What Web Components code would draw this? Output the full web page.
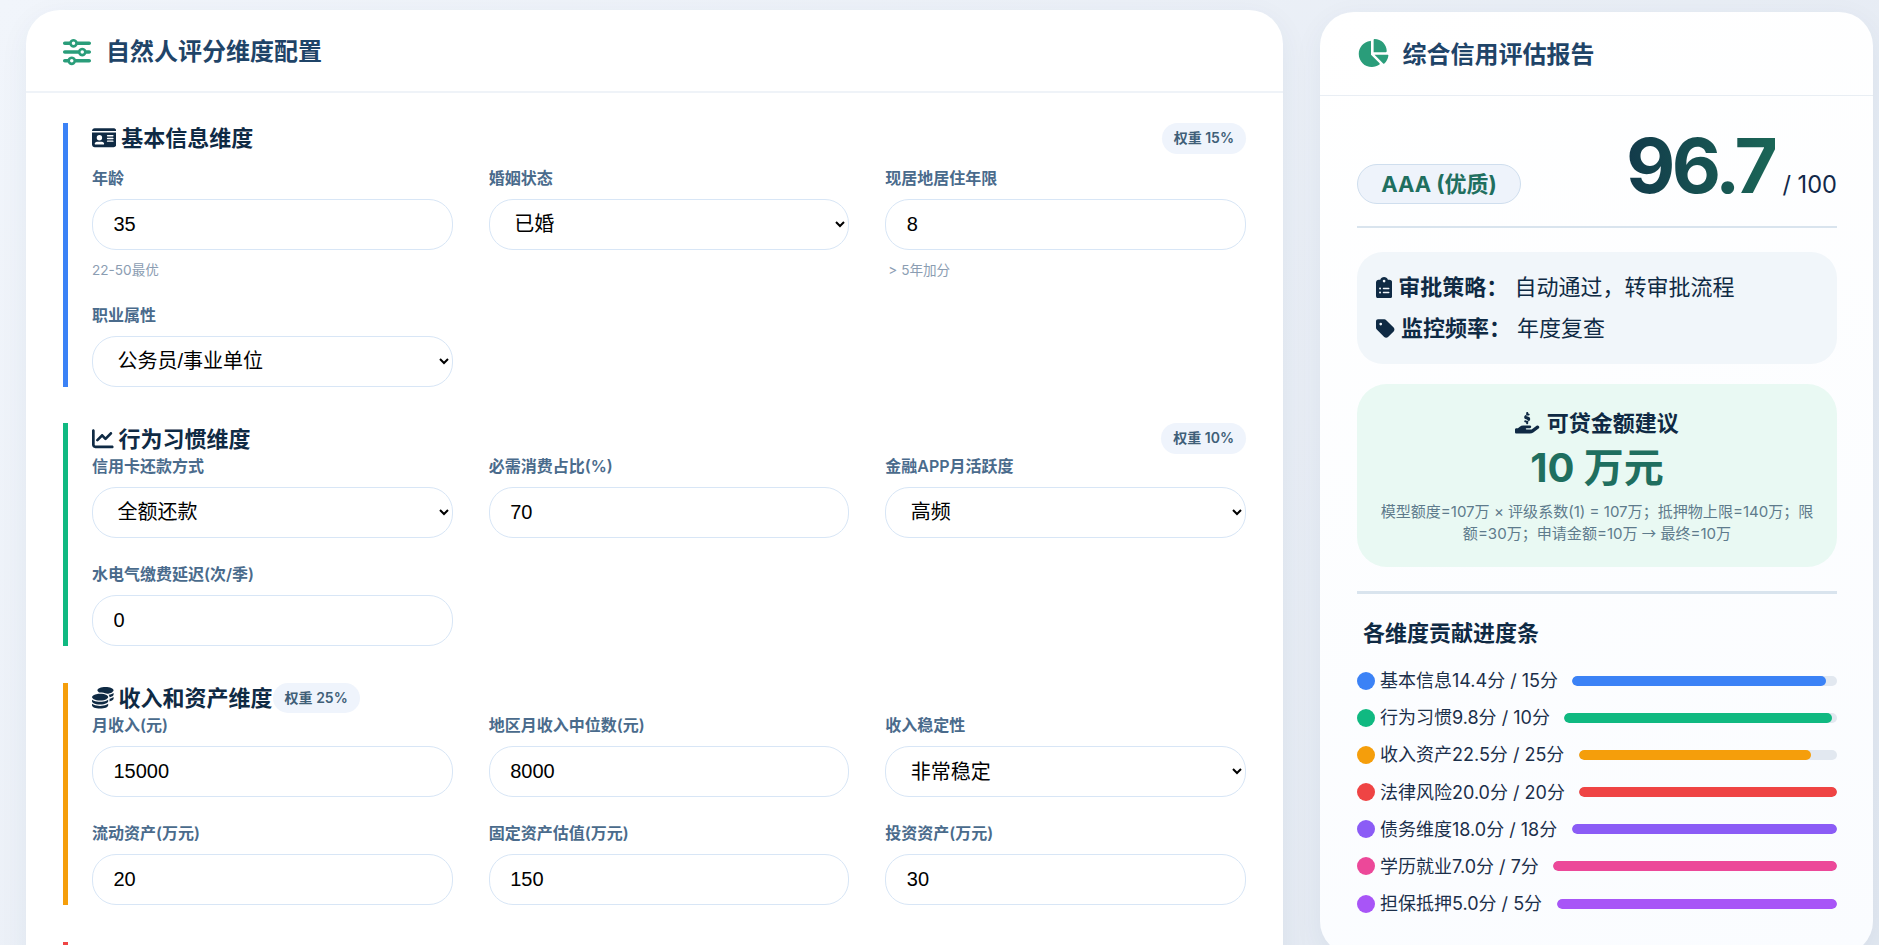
<!DOCTYPE html>
<html lang="zh-CN"><head><meta charset="utf-8"><title>信用评估</title>
<style>
html,body{margin:0;height:945px;overflow:hidden}
body{background:linear-gradient(135deg,#f1f5fb 0%,#e2e8f1 100%);font-family:Inter,"Noto Sans CJK SC",sans-serif;color:#0f2a44}
</style></head><body>
<credit-app>
  <config-card slot="left" heading="自然人评分维度配置">
    <dim-section color="#3b82f6" icon="idcard" heading="基本信息维度" weight="权重 15%" gap>
      <form-field label="年龄" value="35" hint="22-50最优"></form-field>
      <form-field label="婚姻状态" options="已婚,未婚,离异"></form-field>
      <form-field label="现居地居住年限" value="8" hint="&gt; 5年加分" nudge></form-field>
      <form-field label="职业属性" options="公务员/事业单位,企业员工,自由职业"></form-field>
    </dim-section>
    <dim-section color="#10b981" icon="line" heading="行为习惯维度" weight="权重 10%">
      <form-field label="信用卡还款方式" options="全额还款,最低还款"></form-field>
      <form-field label="必需消费占比(%)" value="70"></form-field>
      <form-field label="金融APP月活跃度" options="高频,中频,低频"></form-field>
      <form-field label="水电气缴费延迟(次/季)" value="0"></form-field>
    </dim-section>
    <dim-section color="#f59e0b" icon="coins" heading="收入和资产维度" weight="权重 25%" inline>
      <form-field label="月收入(元)" value="15000"></form-field>
      <form-field label="地区月收入中位数(元)" value="8000"></form-field>
      <form-field label="收入稳定性" options="非常稳定,稳定,一般"></form-field>
      <form-field label="流动资产(万元)" value="20"></form-field>
      <form-field label="固定资产估值(万元)" value="150"></form-field>
      <form-field label="投资资产(万元)" value="30"></form-field>
    </dim-section>
    <dim-section color="#ef4444" icon="scale"></dim-section>
  </config-card>
  <report-card slot="right" heading="综合信用评估报告">
    <progress-row color="#3b82f6" label="基本信息14.4分 / 15分" pct="96"></progress-row>
    <progress-row color="#10b981" label="行为习惯9.8分 / 10分" pct="98"></progress-row>
    <progress-row color="#f59e0b" label="收入资产22.5分 / 25分" pct="90"></progress-row>
    <progress-row color="#ef4444" label="法律风险20.0分 / 20分" pct="100"></progress-row>
    <progress-row color="#8b5cf6" label="债务维度18.0分 / 18分" pct="100"></progress-row>
    <progress-row color="#ec4899" label="学历就业7.0分 / 7分" pct="100"></progress-row>
    <progress-row color="#a855f7" label="担保抵押5.0分 / 5分" pct="100"></progress-row>
  </report-card>
</credit-app>
<script>
const ICONS={
sliders:[512,'M0 416c0 17.700 14.300 32 32 32l54.700 0c12.300 28.300 40.500 48 73.300 48s61-19.700 73.300-48L480 448c17.700 0 32-14.300 32-32s-14.300-32-32-32l-246.700 0c-12.300-28.300-40.500-48-73.300-48s-61 19.700-73.300 48L32 384c-17.700 0-32 14.300-32 32zm128 0a32 32 0 1 1 64 0 32 32 0 1 1 -64 0zM320 256a32 32 0 1 1 64 0 32 32 0 1 1 -64 0zm32-80c-32.800 0-61 19.700-73.300 48L32 224c-17.700 0-32 14.300-32 32s14.300 32 32 32l246.700 0c12.300 28.300 40.500 48 73.300 48s61-19.700 73.300-48l54.700 0c17.700 0 32-14.300 32-32s-14.300-32-32-32l-54.700 0c-12.300-28.300-40.500-48-73.300-48zM192 128a32 32 0 1 1 0-64 32 32 0 1 1 0 64zm73.300-64C253 35.700 224.800 16 192 16s-61 19.700-73.300 48L32 64C14.300 64 0 78.300 0 96s14.300 32 32 32l86.700 0c12.300 28.300 40.500 48 73.300 48s61-19.700 73.300-48L480 128c17.700 0 32-14.300 32-32s-14.300-32-32-32L265.300 64z'],
pie:[576,'M304 240V16.600c0-9 7-16.600 16-16.600C443.700 0 544 100.300 544 224c0 9-7.600 16-16.600 16H304zM32 272C32 150.700 122.100 50.300 239 34.300c9.200-1.300 17 6.100 17 15.400V288L412.500 444.500c6.700 6.700 6.200 17.700-1.500 23.100C371.800 495.600 323.800 512 272 512C139.500 512 32 404.600 32 272zm526.400 16c9.300 0 16.600 7.800 15.400 17c-7.700 55.900-34.600 105.600-73.900 142.300c-6 5.600-15.400 5.200-21.200-.7L320 288H558.400z'],
idcard:[576,'M0 96l576 0c0-35.300-28.700-64-64-64H64C28.700 32 0 60.700 0 96zm0 32V416c0 35.300 28.700 64 64 64H512c35.300 0 64-28.700 64-64V128H0zM64 405.300c0-29.500 23.900-53.300 53.300-53.300H234.700c29.500 0 53.300 23.900 53.300 53.300c0 5.900-4.800 10.700-10.700 10.700H74.700c-5.900 0-10.700-4.800-10.700-10.700zM176 192a64 64 0 1 1 0 128 64 64 0 1 1 0-128zm176 16c0-8.800 7.200-16 16-16H496c8.800 0 16 7.200 16 16s-7.200 16-16 16H368c-8.800 0-16-7.200-16-16zm0 64c0-8.800 7.200-16 16-16H496c8.800 0 16 7.200 16 16s-7.200 16-16 16H368c-8.800 0-16-7.200-16-16zm0 64c0-8.800 7.200-16 16-16H496c8.800 0 16 7.200 16 16s-7.200 16-16 16H368c-8.800 0-16-7.200-16-16z'],
line:[512,'M64 64c0-17.700-14.300-32-32-32S0 46.300 0 64V400c0 44.200 35.800 80 80 80H480c17.700 0 32-14.300 32-32s-14.300-32-32-32H80c-8.800 0-16-7.200-16-16V64zm406.600 86.600c12.500-12.500 12.500-32.800 0-45.300s-32.800-12.500-45.300 0L320 210.700l-57.400-57.400c-12.500-12.500-32.800-12.500-45.300 0l-112 112c-12.500 12.500-12.500 32.800 0 45.300s32.800 12.500 45.300 0L240 221.300l57.400 57.400c12.500 12.500 32.800 12.500 45.300 0l128-128z'],
coins:[512,'M512 80c0 18-14.300 34.600-38.400 48c-29.100 16.100-72.500 27.500-122.300 30.900c-3.700-1.800-7.400-3.500-11.300-5C300.600 137.400 248.200 128 192 128c-8.300 0-16.400 .2-24.500 .6l-1.100-.6C142.300 114.600 128 98 128 80c0-44.200 86-80 192-80S512 35.800 512 80zM160.700 161.100c10.200-.7 20.700-1.100 31.300-1.100c62.200 0 117.400 12.300 152.500 31.400C369.300 204.900 384 221.700 384 240c0 4-.7 7.900-2.100 11.700c-4.600 13.200-17 25.300-35 35.500c-.1 .1-.3 .1-.4 .2c-.3 .2-.6 .3-.9 .5c-35 19.400-90.800 32-153.600 32c-59.600 0-112.900-11.300-148.200-29.100c-1.900-.9-3.700-1.900-5.500-2.900C14.300 274.600 0 258 0 240c0-34.800 53.400-64.500 128-75.400c10.500-1.500 21.400-2.700 32.700-3.500zM416 240c0-21.900-10.600-39.900-24.100-53.400c28.300-4.400 54.200-11.400 76.200-20.500c16.300-6.800 31.500-15.200 43.900-25.500V176c0 19.300-16.500 37.100-43.800 50.900c-14.600 7.400-32.400 13.700-52.400 18.500c.1-1.800 .2-3.500 .2-5.300zm-32 96c0 18-14.300 34.600-38.400 48c-1.800 1-3.600 1.900-5.500 2.900C304.900 404.700 251.600 416 192 416c-62.800 0-118.600-12.600-153.600-32C14.300 370.600 0 354 0 336V300.600c12.500 10.300 27.600 18.700 43.900 25.500C83.400 342.600 135.800 352 192 352s108.600-9.400 148.100-25.900c7.800-3.200 15.300-6.900 22.400-10.900c6.100-3.400 11.800-7.200 17.200-11.200c1.500-1.100 2.900-2.300 4.300-3.400V336zm32 0V278.100c19-4.200 36.500-9.500 52.100-16c16.300-6.800 31.500-15.200 43.900-25.500V272c0 10.500-5 21-14.900 30.900c-16.300 16.300-45 29.700-81.300 38.400c.1-1.700 .2-3.500 .2-5.300zM192 448c56.200 0 108.600-9.400 148.100-25.900c16.300-6.800 31.500-15.200 43.900-25.500V432c0 44.200-86 80-192 80S0 476.200 0 432V396.600c12.500 10.300 27.600 18.700 43.900 25.500C83.400 438.600 135.800 448 192 448z'],
clip:[384,'M192 0c-41.800 0-77.400 26.700-90.500 64H64C28.700 64 0 92.700 0 128V448c0 35.300 28.700 64 64 64H320c35.300 0 64-28.700 64-64V128c0-35.300-28.700-64-64-64H282.500C269.400 26.700 233.800 0 192 0zm0 64a32 32 0 1 1 0 64 32 32 0 1 1 0-64zM72 272a24 24 0 1 1 48 0 24 24 0 1 1 -48 0zm104-16H304c8.800 0 16 7.200 16 16s-7.200 16-16 16H176c-8.800 0-16-7.200-16-16s7.200-16 16-16zM72 368a24 24 0 1 1 48 0 24 24 0 1 1 -48 0zm88 0c0-8.800 7.200-16 16-16H304c8.800 0 16 7.200 16 16s-7.200 16-16 16H176c-8.800 0-16-7.200-16-16z'],
tag:[448,'M0 80V229.500c0 17 6.700 33.300 18.700 45.300l176 176c25 25 65.500 25 90.500 0L418.700 317.300c25-25 25-65.500 0-90.500l-176-176c-12-12-28.300-18.700-45.300-18.700H48C21.500 32 0 53.500 0 80zm112 32a32 32 0 1 1 0 64 32 32 0 1 1 0-64z'],
scale:[640,'M320 0c17.700 0 32 14.300 32 32v16h128c17.700 0 32 14.300 32 32s-14.300 32-32 32H352v320h128c17.700 0 32 14.300 32 32s-14.300 32-32 32H160c-17.700 0-32-14.300-32-32s14.300-32 32-32h128V112H160c-17.700 0-32-14.300-32-32s14.300-32 32-32h128V32c0-17.700 14.300-32 32-32z'],
hand:[576,'M312 24V34.500c6.400 1.200 12.600 2.700 18.200 4.200c12.800 3.400 20.400 16.600 17 29.400s-16.600 20.400-29.400 17c-10.900-2.900-21.100-4.900-30.200-5c-7.300-.1-14.700 1.700-19.400 4.400c-2.100 1.300-3.100 2.400-3.500 3c-.3 .5-.7 1.200-.7 2.800c0 .3 0 .5 0 .6c.2 .2 .9 1.200 3.300 2.600c5.800 3.500 14.400 6.200 27.400 10.100l.9 .3c11.100 3.300 25.900 7.800 37.900 15.300c13.700 8.600 26.100 22.900 26.400 44.900c.3 22.500-11.400 38.900-26.800 48.600c-6.700 4.100-13.700 7-20.800 8.800V264c0 13.300-10.700 24-24 24s-24-10.700-24-24V251.500c-8.300-1.800-16.200-4.300-23.300-6.600c-2.400-.8-4.800-1.600-7.100-2.300c-12.600-4-19.600-17.400-15.600-30.100s17.400-19.600 30.100-15.600c2.700 .8 5.200 1.600 7.600 2.400c14.300 4.600 24.300 7.800 34.900 8.100c8 .3 15.100-1.600 19.200-4.100c1.900-1.200 2.800-2.200 3.200-2.900c.4-.6 .9-1.800 .8-4.100l0-.2c0-1 0-2.100-4-4.600c-5.700-3.600-14.300-6.400-27.100-10.300l-1.900-.6c-10.800-3.200-25-7.500-36.400-14.400c-13.500-8.100-26.500-22-26.600-44.100c-.1-22.900 12.900-38.600 27.700-47.400c6.400-3.800 13.300-6.400 20.200-8.200V24c0-13.300 10.700-24 24-24s24 10.700 24 24zM568.200 336.300c13.100 17.800 9.300 42.800-8.500 55.900L433.100 485.500c-23.400 17.200-51.600 26.500-80.700 26.500H192 32c-17.700 0-32-14.300-32-32V416c0-17.700 14.300-32 32-32H68.800l44.900-36c22.700-18.200 50.900-28 80-28H272h16 64c17.700 0 32 14.300 32 32s-14.300 32-32 32H288 272c-8.800 0-16 7.200-16 16s7.200 16 16 16H392.600l119.700-88.200c17.800-13.100 42.800-9.300 55.900 8.500z']
};
function ico(n,h,fill){const [w,d]=ICONS[n];return `<svg viewBox="0 0 ${w} 512" width="${(w/512*h).toFixed(2)}" height="${h}" fill="${fill||'currentColor'}" style="display:inline-block;flex:none;vertical-align:-0.125em"><path d="${d}"/></svg>`}
function mk(el,html){el.attachShadow({mode:'open'}).innerHTML=html}

class CreditApp extends HTMLElement{connectedCallback(){mk(this,`<style>
:host{display:flex;align-items:flex-start;gap:37px;padding:10px 6px 0 26px;height:945px;overflow:hidden;box-sizing:border-box}
::slotted([slot=left]){width:1257px;flex:none}
::slotted([slot=right]){width:553px;flex:none;margin-top:2px}
</style><slot name="left"></slot><slot name="right"></slot>`)}}

class ConfigCard extends HTMLElement{connectedCallback(){mk(this,`<style>
:host{display:block;background:#fff;border-radius:34px;box-shadow:0 8px 30px rgba(40,70,100,.06)}
header{height:83px;box-sizing:border-box;display:flex;align-items:center;gap:15px;padding:2px 37px 0;border-bottom:2px solid #eff3f8;
 font:700 24px/1.3 Inter,"Noto Sans CJK SC",sans-serif;color:#1f4468}
.body{padding:30px 37px 40px;display:flex;flex-direction:column;gap:36.6px}
</style><header>${ico('sliders',28,'#2a9d7a')}<span>${this.getAttribute('heading')}</span></header><div class="body"><slot></slot></div>`)}}

class DimSection extends HTMLElement{connectedCallback(){
const a=n=>this.getAttribute(n);
const h=a('heading'),w=a('weight');
mk(this,`<style>
:host{display:block;border-left:5px solid ${a('color')};padding-left:24px}
.head{display:flex;align-items:center;justify-content:${this.hasAttribute('inline')?'flex-start':'space-between'};height:30.5px;margin-bottom:${this.hasAttribute('gap')?12:0}px}
h3{margin:0;font:700 22px/30px Inter,"Noto Sans CJK SC",sans-serif;color:#0f2a44;display:flex;align-items:center;gap:5px}
.w{font:600 14px/20px Inter,"Noto Sans CJK SC",sans-serif;color:#3f5f78;background:#eff4fc;border-radius:99px;height:30.5px;line-height:30px;padding:0 12px;box-sizing:border-box}
.grid{display:grid;grid-template-columns:repeat(3,1fr);column-gap:36px;row-gap:24px}
</style><div class="head"><h3>${ico(a('icon'),21.6)}${h?`<span>${h}</span>`:''}</h3>${w?`<span class="w">${w}</span>`:''}</div><div class="grid"><slot></slot></div>`)}}

class FormField extends HTMLElement{connectedCallback(){
const a=n=>this.getAttribute(n);
const ctl=a('options')?`<select>${a('options').split(',').map(o=>`<option>${o}</option>`).join('')}</select>`:`<input type="text" value="${a('value')}">`;
mk(this,`<style>
:host{display:block;min-width:0}
label{display:block;font:600 16px/24px Inter,"Noto Sans CJK SC",sans-serif;color:#4a6b8c;margin-bottom:9px}
input,select{display:block;width:100%;height:51px;box-sizing:border-box;border:1.5px solid #d8e6f6;border-radius:24px;background:#fff;padding:0 20.5px;
 font:400 20px "Liberation Sans","Noto Sans CJK SC",sans-serif;color:#000;outline:none;margin:0}
.hint{font:400 13.6px/18px Inter,"Noto Sans CJK SC",sans-serif;color:#8b9db2;margin:11px 0 .4px;white-space:pre;padding-left:${this.hasAttribute('nudge')?3:0}px}
</style><label>${a('label')}</label>${ctl}${a('hint')?`<div class="hint">${a('hint')}</div>`:''}`)}}

class ReportCard extends HTMLElement{connectedCallback(){mk(this,`<style>
:host{display:block;background:linear-gradient(160deg,#fff,#fafcff);border-radius:34px;box-shadow:0 8px 30px rgba(40,70,100,.06);font-family:Inter,"Noto Sans CJK SC",sans-serif;color:#0f2a44}
header{height:84px;box-sizing:border-box;display:flex;align-items:center;gap:14px;padding:0 37px 2px;border-bottom:1px solid #e9eef4;font-weight:700;font-size:24px;color:#1f4468}
.body{padding:0 36px 38px 37px}
.top{height:132px;box-sizing:border-box;border-bottom:2px solid #d9e4ee;display:flex;justify-content:space-between;align-items:flex-end;padding-bottom:22px}
.grade{height:40px;width:164px;box-sizing:border-box;border:1px solid #cfdeee;border-radius:99px;background:#eef3fb;display:flex;align-items:center;justify-content:center;font-size:22px;font-weight:700;color:#1f6f5f;padding-bottom:4px}
.score{display:flex;align-items:baseline;gap:7.5px;margin-bottom:1.5px}
.big{font-size:76px;font-weight:700;line-height:1;background:linear-gradient(90deg,#123a4a,#1b6657);-webkit-background-clip:text;background-clip:text;color:transparent;letter-spacing:-3.8px}
.of{font-size:23.6px;color:#12294a}
.strategy{margin-top:24px;background:#f1f6fa;border-radius:26px;padding:19px;display:flex;flex-direction:column;gap:8px;font-size:22px;line-height:33px}
.strategy div{display:flex;align-items:center;white-space:pre}
.strategy b{font-weight:700;color:#0f2a44}
.strategy svg{margin-right:6px}
.loan{margin-top:20px;background:#e9f9f3;border-radius:30px;padding:24px 20px;text-align:center;height:183px;box-sizing:border-box}
.lt{font-weight:700;font-size:22px;line-height:30px;display:flex;justify-content:center;align-items:center;gap:7px}
.la{font-weight:700;font-size:40px;line-height:48px;margin-top:6px;color:#1f6f5f}
.ln{font-size:15.05px;line-height:21px;color:#5e7b8c;margin-top:9px}
.ln span{font-family:"Noto Sans CJK SC",sans-serif;font-size:14.4px}
.div2{height:3px;background:#d9e4ee;margin-top:24px}
h4{margin:24px 0 19px 6px;font:700 22px/30px Inter,"Noto Sans CJK SC",sans-serif;color:#0f2a44}
.rows{display:flex;flex-direction:column;gap:10.2px}
</style><header>${ico('pie',28,'#2a9d7a')}<span>${this.getAttribute('heading')}</span></header>
<div class="body">
<div class="top"><div class="grade">AAA (优质)</div><div class="score"><span class="big">96.7</span><span class="of">/ 100</span></div></div>
<div class="strategy"><div>${ico('clip',21.6)}<b>审批策略：</b> 自动通过，转审批流程</div><div>${ico('tag',21.6)}<b>监控频率：</b> 年度复查</div></div>
<div class="loan"><div class="lt">${ico('hand',21.6)}<span>可贷金额建议</span></div><div class="la">10 万元</div><div class="ln">模型额度=107万 × 评级系数(1) = 107万；抵押物上限=140万；限<wbr>额=30万；申请金额=10万 <span>→</span> 最终=10万</div></div>
<div class="div2"></div>
<h4>各维度贡献进度条</h4>
<div class="rows"><slot></slot></div>
</div>`)}}

class ProgressRow extends HTMLElement{connectedCallback(){
const a=n=>this.getAttribute(n);
mk(this,`<style>
:host{display:flex;align-items:center;font:400 18px/27px Inter,"Noto Sans CJK SC",sans-serif;color:#1b2f4a}
i{width:18px;height:18px;border-radius:50%;background:${a('color')};flex:none;margin-right:5px}
.t{white-space:nowrap;margin-right:14.4px}
.b{flex:1;height:10px;border-radius:99px;background:#e2e8f0;overflow:hidden}
.f{height:100%;width:${a('pct')}%;border-radius:99px;background:${a('color')}}
</style><i></i><span class="t">${a('label')}</span><div class="b"><div class="f"></div></div>`)}}

customElements.define('credit-app',CreditApp);
customElements.define('config-card',ConfigCard);
customElements.define('dim-section',DimSection);
customElements.define('form-field',FormField);
customElements.define('report-card',ReportCard);
customElements.define('progress-row',ProgressRow);
</script>
</body></html>
